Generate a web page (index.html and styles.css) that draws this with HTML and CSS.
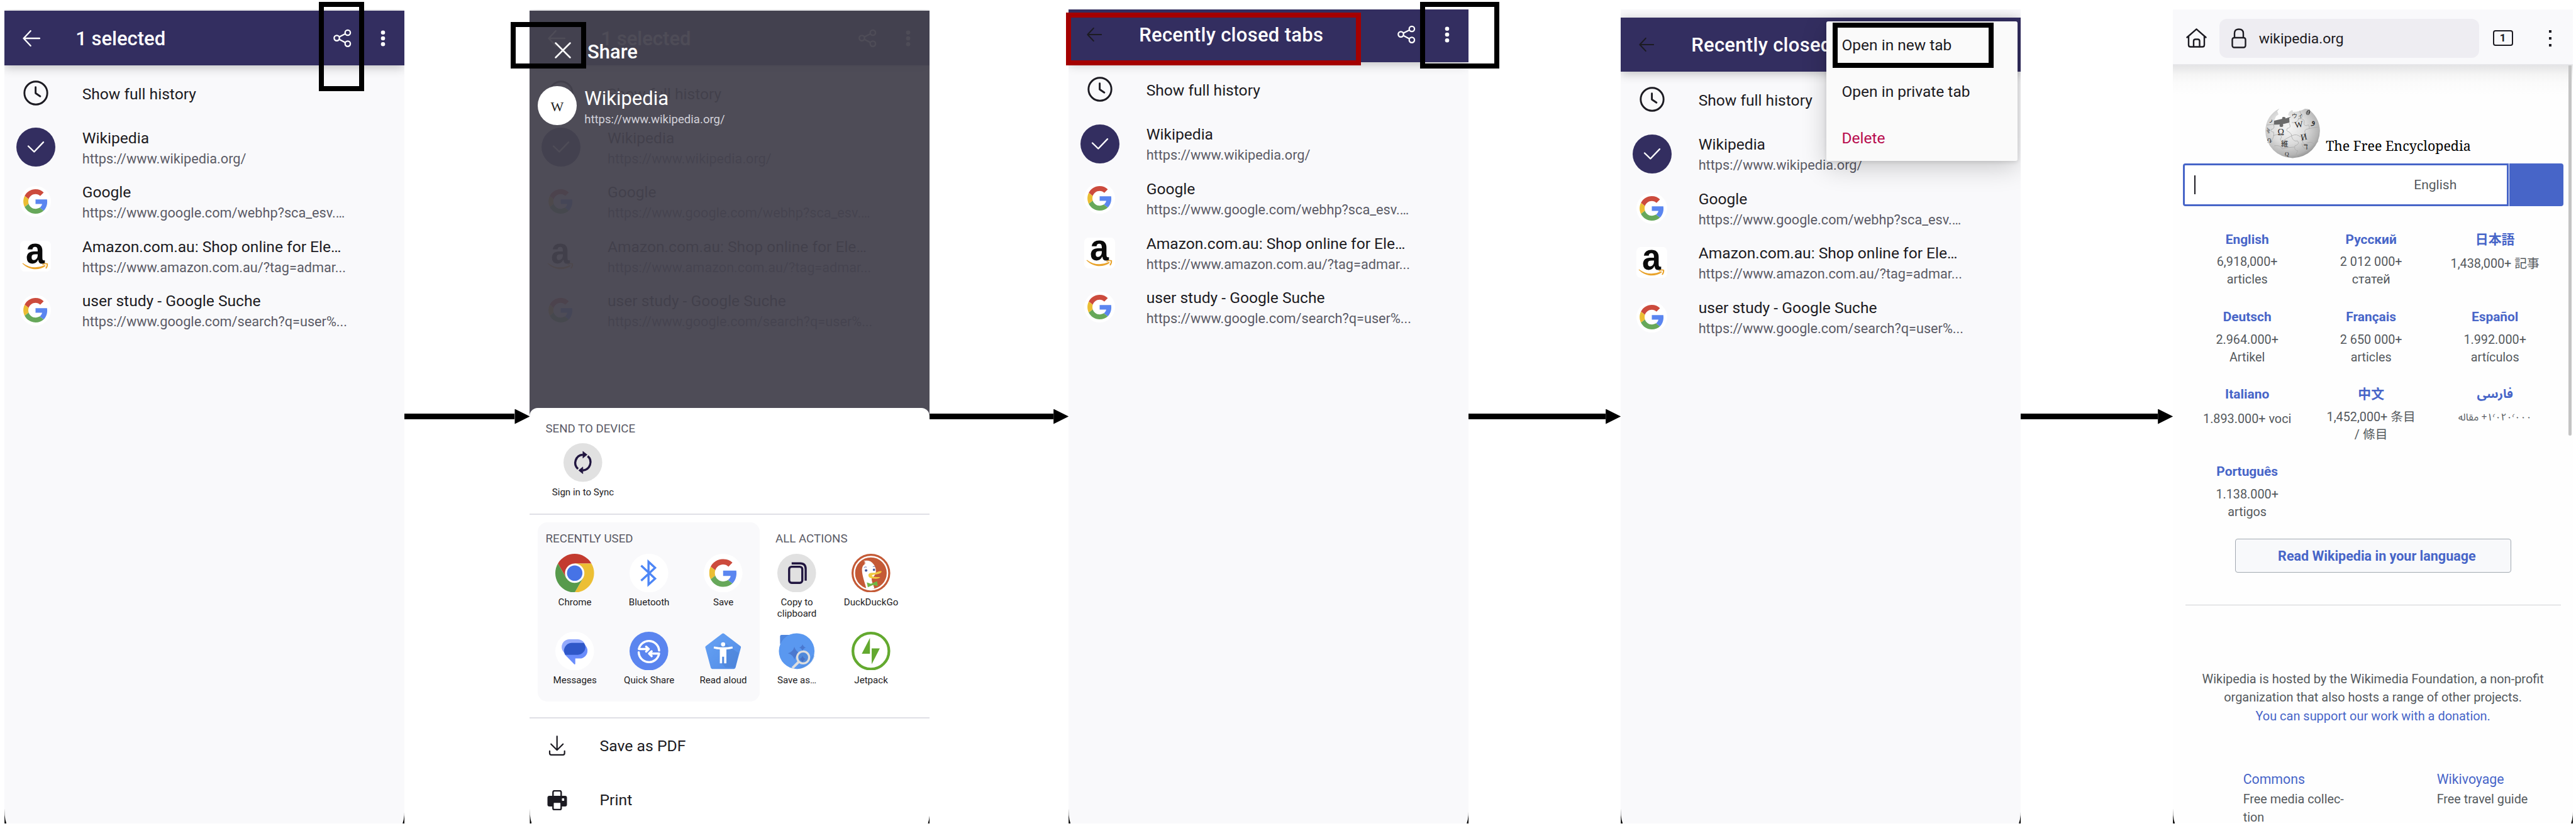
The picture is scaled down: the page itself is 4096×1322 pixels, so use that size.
FILE: index.html
```html
<!DOCTYPE html>
<html lang="en">
<head>
<meta charset="utf-8">
<title>Recently closed tabs – share and open flow</title>
<link rel="stylesheet" href="styles.css">
</head>
<body>
<svg class="defs" width="0" height="0" aria-hidden="true">
  <defs>
    <linearGradient id="pent" x1="0" y1="0" x2="1" y2="1"><stop offset="0" stop-color="#66a2f4"/><stop offset="1" stop-color="#528ce6"/></linearGradient>
    <radialGradient id="sphere" cx=".42" cy=".38" r=".66"><stop offset="0" stop-color="#f6f6f6"/><stop offset=".5" stop-color="#dcdcdc"/><stop offset=".85" stop-color="#b4b4b4"/><stop offset="1" stop-color="#8e8e8e"/></radialGradient>
  </defs>
  <symbol id="i-back" viewBox="0 0 28 26"><path d="M27 13H1.6M12.6 1.2 1.6 13l11 11.8" fill="none" stroke="currentColor" stroke-width="2.4" stroke-linecap="round" stroke-linejoin="round"/></symbol>
  <symbol id="i-share" viewBox="0 0 29 30"><g fill="none" stroke="currentColor" stroke-width="2.3"><circle cx="5.5" cy="14.6" r="4.2"/><circle cx="22.9" cy="6" r="4.2"/><circle cx="22.9" cy="23.6" r="4.2"/><path d="m9.3 12.7 9.8-4.9M9.3 16.6l9.8 5.1"/></g></symbol>
  <symbol id="i-dots" viewBox="0 0 8 26"><g fill="currentColor"><circle cx="4" cy="3.7" r="3.3"/><circle cx="4" cy="13" r="3.3"/><circle cx="4" cy="22.3" r="3.3"/></g></symbol>
  <symbol id="i-clock" viewBox="0 0 40 40"><g fill="none" stroke="currentColor" stroke-width="2.9" stroke-linecap="round" stroke-linejoin="round"><circle cx="20" cy="20" r="18.2"/><path d="M19.6 10.8v9.4l7.3 5"/></g></symbol>
  <symbol id="i-check" viewBox="0 0 62 62"><circle cx="31" cy="31" r="31" fill="#332e60"/><path d="m19 29.5 9.3 9L43 23.2" fill="none" stroke="#fff" stroke-width="2.4" stroke-linecap="round" stroke-linejoin="round"/></symbol>
  <symbol id="g" viewBox="0 0 48 48"><path fill="#cc4b3d" d="M24 9.5c3.54 0 6.71 1.22 9.21 3.6l6.85-6.85C35.9 2.38 30.47 0 24 0 14.62 0 6.51 5.38 2.56 13.22l7.98 6.19C12.43 13.72 17.74 9.5 24 9.5z"/><path fill="#5b86f0" d="M46.98 24.55c0-1.57-.15-3.09-.38-4.55H24v9.02h12.94c-.58 2.96-2.26 5.48-4.78 7.18l7.73 6c4.51-4.18 7.09-10.36 7.09-17.65z"/><path fill="#ebbe33" d="M10.53 28.59c-.48-1.45-.76-2.99-.76-4.59s.27-3.14.76-4.59l-7.98-6.19C.92 16.46 0 20.12 0 24c0 3.88.92 7.54 2.56 10.78l7.97-6.19z"/><path fill="#67a85a" d="M24 48c6.48 0 11.93-2.13 15.89-5.81l-7.73-6c-2.15 1.45-4.92 2.3-8.16 2.3-6.26 0-11.57-4.22-13.47-9.91l-7.98 6.19C6.51 42.62 14.62 48 24 48z"/></symbol>
  <symbol id="i-google" viewBox="0 0 48 48"><circle cx="24" cy="24" r="24" fill="#fff"/><use href="#g" x="5" y="5" width="38" height="38"/></symbol>
  <symbol id="i-amazon" viewBox="0 0 49 49"><rect width="49" height="49" rx="7" fill="#fff"/><text x="9" y="35.5" class="amazon-a" textLength="30" lengthAdjust="spacingAndGlyphs">a</text><path d="M3.5 36.2C14 46.5 29 48.2 40.5 40.2l-1-1.6C28 44 15 43.6 4.2 35.4Z" fill="#e9a32b"/><path d="M35.6 38c3-1.9 6-1.7 7.6-1.2.3 2.2-.7 5.2-2.3 7.2" fill="none" stroke="#e9a32b" stroke-width="1.9"/></symbol>
</svg>

<main class="board">

  <section class="screen">
    <div class="viewport">
      <header class="bar"><svg class="back"><use href="#i-back"/></svg><h1>1 selected</h1><svg class="share"><use href="#i-share"/></svg><svg class="dots"><use href="#i-dots"/></svg></header>
      <ul class="tabs">
        <li><span class="ico"><svg class="clock"><use href="#i-clock"/></svg></span><div class="txt"><p class="t">Show full history</p></div></li>
        <li><span class="ico"><svg class="check"><use href="#i-check"/></svg></span><div class="txt"><p class="t">Wikipedia</p><p class="u">https://www.wikipedia.org/</p></div></li>
        <li><span class="ico"><svg class="fav"><use href="#i-google"/></svg></span><div class="txt"><p class="t">Google</p><p class="u">https://www.google.com/webhp?sca_esv.…</p></div></li>
        <li><span class="ico"><svg class="fav"><use href="#i-amazon"/></svg></span><div class="txt"><p class="t">Amazon.com.au: Shop online for Ele…</p><p class="u">https://www.amazon.com.au/?tag=admar...</p></div></li>
        <li><span class="ico"><svg class="fav"><use href="#i-google"/></svg></span><div class="txt"><p class="t">user study - Google Suche</p><p class="u">https://www.google.com/search?q=user%...</p></div></li>
      </ul>
    </div>
    <div class="mark mark-share"></div>
  </section>

  <div class="arrow a1"></div>

  <section class="screen">
    <div class="viewport">
      <header class="bar"><svg class="back"><use href="#i-back"/></svg><h1>1 selected</h1><svg class="share"><use href="#i-share"/></svg><svg class="dots"><use href="#i-dots"/></svg></header>
      <ul class="tabs">
        <li><span class="ico"><svg class="clock"><use href="#i-clock"/></svg></span><div class="txt"><p class="t">Show full history</p></div></li>
        <li><span class="ico"><svg class="check"><use href="#i-check"/></svg></span><div class="txt"><p class="t">Wikipedia</p><p class="u">https://www.wikipedia.org/</p></div></li>
        <li><span class="ico"><svg class="fav"><use href="#i-google"/></svg></span><div class="txt"><p class="t">Google</p><p class="u">https://www.google.com/webhp?sca_esv.…</p></div></li>
        <li><span class="ico"><svg class="fav"><use href="#i-amazon"/></svg></span><div class="txt"><p class="t">Amazon.com.au: Shop online for Ele…</p><p class="u">https://www.amazon.com.au/?tag=admar...</p></div></li>
        <li><span class="ico"><svg class="fav"><use href="#i-google"/></svg></span><div class="txt"><p class="t">user study - Google Suche</p><p class="u">https://www.google.com/search?q=user%...</p></div></li>
      </ul>
      <div class="share-layer">
        <div class="share-head"><svg class="close" viewBox="0 0 26 26"><path d="m1.5 1.5 23 23M24.5 1.5l-23 23" stroke="#fff" stroke-width="2.5" stroke-linecap="round"/></svg><h2>Share</h2></div>
        <div class="share-page"><span class="w-badge">W</span><div><p class="sp-title">Wikipedia</p><p class="sp-url">https://www.wikipedia.org/</p></div></div>
        <div class="sheet">
          <div class="devices">
            <h3>SEND TO DEVICE</h3>
            <div class="app sync">
              <svg viewBox="0 0 100 100"><circle cx="50" cy="50" r="50" fill="#e1e1e1"/><g fill="none" stroke="#20153f" stroke-width="5.5"><path d="M37.5 66.5A21 21 0 0 1 50 29.8M62.5 33.5A21 21 0 0 1 50 70.2"/></g><path d="M50 21l11 8.8-11 8.8zM50 79l-11-8.8 11-8.8z" fill="#20153f" stroke="#20153f" stroke-width="1" stroke-linejoin="round"/></svg>
              <p>Sign in to Sync</p>
            </div>
          </div>
          <div class="actions">
            <div class="panel recent">
              <h3>RECENTLY USED</h3>
              <div class="apps three">
                <div class="app"><svg viewBox="0 0 100 100"><path fill="#c33b2f" d="M6.7 25A50 50 0 0 1 93.3 25H50L28.3 62.5Z"/><path fill="#ecbf34" d="M93.3 25A50 50 0 0 1 50 100L71.7 62.5 50 25Z"/><path fill="#579a4c" d="M50 100A50 50 0 0 1 6.7 25L28.3 62.5 50 75 71.7 62.5Z"/><circle cx="50" cy="50" r="25" fill="#fff"/><circle cx="50" cy="50" r="20" fill="#4673e6"/></svg><p>Chrome</p></div>
                <div class="app"><svg viewBox="0 0 100 100"><circle cx="50" cy="50" r="50" fill="#fff"/><path d="M30 30.5 66 64 49 79.5V20.5L66 36 30 69.5" fill="none" stroke="#4d86f6" stroke-width="5.5"/></svg><p>Bluetooth</p></div>
                <div class="app"><svg viewBox="0 0 100 100"><circle cx="50" cy="50" r="50" fill="#fff"/><use href="#g" x="14" y="13.5" width="72" height="72"/></svg><p>Save</p></div>
                <div class="app"><svg viewBox="0 0 100 100"><circle cx="50" cy="50" r="50" fill="#fff"/><rect x="16.5" y="19.5" width="61" height="40" rx="20" fill="#93aafc"/><path d="M42.5 29H63A20 20 0 0 1 63 69H51.5V83Q51 85.5 49 84L26 60.5A20 20 0 0 1 42.5 29Z" fill="#6a8dfc"/><path d="M42.5 29H73.5Q77.6 33 77.6 40A20 20 0 0 1 58 59.5H25.5Q22.5 54 22.5 49A20 20 0 0 1 42.5 29Z" fill="#2f58c9"/></svg><p>Messages</p></div>
                <div class="app"><svg viewBox="0 0 100 100"><circle cx="50" cy="50" r="50" fill="#5b85ef"/><g fill="none" stroke="#fff" stroke-width="5.6" stroke-linecap="round" stroke-linejoin="round"><path d="M76.3 48.5A26.5 26.5 0 0 0 24 44.5H49M43 38.5l6.5 6-6.5 6.5"/><path d="M23.7 53A26.5 26.5 0 0 0 76.3 56.5H51M57 50.5l-6.5 6 6.5 6.5"/></g></svg><p>Quick Share</p></div>
                <div class="app"><svg viewBox="0 0 100 100"><path d="M50 8 92 40 78 92H22L8 40Z" fill="url(#pent)" stroke="url(#pent)" stroke-width="8" stroke-linejoin="round"/><path d="M55 30 90 55 82 92H56L42 78V48L27 43Z" fill="#4678c8" opacity=".35"/><circle cx="50" cy="32.5" r="5.5" fill="#fff"/><path d="M26.5 38Q50 42.5 74 38L75 43Q66 45.2 58.5 46V81.5H52.5V64.5H47.5V81.5H41.5V46Q34 45.2 25.5 43Z" fill="#fff"/></svg><p>Read aloud</p></div>
              </div>
            </div>
            <div class="panel all">
              <h3>ALL ACTIONS</h3>
              <div class="apps two">
                <div class="app"><svg viewBox="0 0 100 100"><circle cx="50" cy="50" r="50" fill="#e1e1e1"/><g fill="none" stroke="#20153f" stroke-width="5.5"><rect x="30.5" y="33.5" width="34" height="41.5" rx="6.5"/><path d="M37 24.8H59Q73.2 24.8 73.2 39.5V69.5"/></g></svg><p>Copy to clipboard</p></div>
                <div class="app"><svg viewBox="0 0 100 100"><circle cx="50" cy="50" r="50" fill="#c45a36"/><circle cx="50" cy="50" r="42.8" fill="none" stroke="#fff" stroke-width="4"/><path d="M37 25 32 24.5Q36 22 36 21L31 18.5Q48 15 56 26 63 33 63 46 62 56 52 64C52 74 57 80 59 89.5Q48 93 38 89.5C35 76 27 57 27 42 27 33 31 27 37 25Z" fill="#fff"/><circle cx="37.5" cy="43" r="3.4" fill="#46599c"/><circle cx="58" cy="41.3" r="3" fill="#46599c"/><path d="M32 36Q35 32.5 39 34.5M55 33.5Q58 31.5 61 33.5" fill="none" stroke="#46599c" stroke-width="1.4"/><path d="M43.5 55C44 48 54 49 60 49 67 48 71 44 77.5 45 78 50 70 52 62 53.5 55 54 52 54.5 53 57.5 56 60.5 66 59.5 74 60 72 64.5 64 65 57 64 49 63 43.5 61 43.5 55Z" fill="#f1cb40"/><path d="M39.5 74 50 77.5 66 70.5 68 83.5 56 80.5 42 86.5Z" fill="#70b546"/></svg><p>DuckDuckGo</p></div>
                <div class="app"><svg viewBox="0 0 100 100"><path d="M7 32V12Q7 8 11 8H40Z" fill="#4f86de"/><circle cx="50" cy="50" r="46" fill="#5a98f0"/><path d="M70 82 92 60 96 62A46 46 0 0 1 50 96Z" fill="#4e8be0" opacity=".5"/><g fill="#4a78cf"><path d="M44 39Q47.5 52 60 55.5 47.5 59 44 72 40.5 59 27.5 55.5 40.5 52 44 39Z"/><path d="M65 32.5Q67 39 73.5 41 67 43 65 49.5 63 43 56.5 41 63 39 65 32.5Z"/></g><path d="M55.5 77.5 39 94" stroke="#dedede" stroke-width="6.5"/><circle cx="66.7" cy="66.3" r="15.5" fill="#5089da" stroke="#dedede" stroke-width="5.4"/><path d="M65 62Q67 68.5 73.5 70.5 67 72.5 65 79 63 72.5 56.5 70.5 63 68.5 65 62Z" fill="#4670c2"/></svg><p>Save as…</p></div>
                <div class="app"><svg viewBox="0 0 100 100"><circle cx="50" cy="50" r="46.5" fill="#fff" stroke="#63a92f" stroke-width="7"/><path d="M47.5 16V57H26.5ZM52 43H73L52 84Z" fill="#63a92f"/></svg><p>Jetpack</p></div>
              </div>
            </div>
          </div>
          <div class="outputs">
            <div class="out"><svg viewBox="0 0 32 32"><g fill="none" stroke="#1c1b22" stroke-width="2.2" stroke-linecap="round" stroke-linejoin="round"><path d="M15.7 1.3V22.5M6.2 13.7l9.5 9.5 9.5-9.5"/><path d="M4 24.8v3.5q0 2.5 2.5 2.5H25.2q2.5 0 2.5-2.5v-3.5"/></g></svg><p>Save as PDF</p></div>
            <div class="out"><svg viewBox="0 0 32 32"><rect x="9.3" y="1" width="13" height="14" rx="2.5" fill="none" stroke="#1c1b22" stroke-width="2.4"/><path d="M3.5 9H28.5Q31.5 9 31.5 12V23Q31.5 26 28.5 26H3.5Q.5 26 .5 23V12Q.5 9 3.5 9Z" fill="#1c1b22"/><rect x="23.5" y="13" width="3.6" height="4" rx=".8" fill="#fff"/><rect x="9.3" y="19" width="13" height="12" rx="2" fill="#fff" stroke="#1c1b22" stroke-width="2.4"/></svg><p>Print</p></div>
          </div>
        </div>
      </div>
    </div>
    <div class="mark mark-close"></div>
  </section>

  <div class="arrow a2"></div>

  <section class="screen raised">
    <div class="viewport">
      <header class="bar dark-back"><svg class="back"><use href="#i-back"/></svg><h1 class="wide">Recently closed tabs</h1><svg class="share"><use href="#i-share"/></svg><svg class="dots"><use href="#i-dots"/></svg></header>
      <ul class="tabs">
        <li><span class="ico"><svg class="clock"><use href="#i-clock"/></svg></span><div class="txt"><p class="t">Show full history</p></div></li>
        <li><span class="ico"><svg class="check"><use href="#i-check"/></svg></span><div class="txt"><p class="t">Wikipedia</p><p class="u">https://www.wikipedia.org/</p></div></li>
        <li><span class="ico"><svg class="fav"><use href="#i-google"/></svg></span><div class="txt"><p class="t">Google</p><p class="u">https://www.google.com/webhp?sca_esv.…</p></div></li>
        <li><span class="ico"><svg class="fav"><use href="#i-amazon"/></svg></span><div class="txt"><p class="t">Amazon.com.au: Shop online for Ele…</p><p class="u">https://www.amazon.com.au/?tag=admar...</p></div></li>
        <li><span class="ico"><svg class="fav"><use href="#i-google"/></svg></span><div class="txt"><p class="t">user study - Google Suche</p><p class="u">https://www.google.com/search?q=user%...</p></div></li>
      </ul>
    </div>
    <div class="mark mark-title"></div>
    <div class="mark mark-menu"></div>
  </section>

  <div class="arrow a3"></div>

  <section class="screen lowered">
    <div class="viewport">
      <header class="bar dark-back"><svg class="back"><use href="#i-back"/></svg><h1 class="wide">Recently closed tabs</h1></header>
      <ul class="tabs">
        <li><span class="ico"><svg class="clock"><use href="#i-clock"/></svg></span><div class="txt"><p class="t">Show full history</p></div></li>
        <li><span class="ico"><svg class="check"><use href="#i-check"/></svg></span><div class="txt"><p class="t">Wikipedia</p><p class="u">https://www.wikipedia.org/</p></div></li>
        <li><span class="ico"><svg class="fav"><use href="#i-google"/></svg></span><div class="txt"><p class="t">Google</p><p class="u">https://www.google.com/webhp?sca_esv.…</p></div></li>
        <li><span class="ico"><svg class="fav"><use href="#i-amazon"/></svg></span><div class="txt"><p class="t">Amazon.com.au: Shop online for Ele…</p><p class="u">https://www.amazon.com.au/?tag=admar...</p></div></li>
        <li><span class="ico"><svg class="fav"><use href="#i-google"/></svg></span><div class="txt"><p class="t">user study - Google Suche</p><p class="u">https://www.google.com/search?q=user%...</p></div></li>
      </ul>
      <div class="menu"><p>Open in new tab</p><p>Open in private tab</p><p class="danger">Delete</p></div>
    </div>
    <div class="mark mark-open"></div>
  </section>

  <div class="arrow a4"></div>

  <section class="screen web">
    <div class="viewport">
      <header class="toolbar">
        <svg class="home" viewBox="0 0 33 31"><g fill="none" stroke="#1c1b22" stroke-width="2.4" stroke-linejoin="round" stroke-linecap="round"><path d="M1.5 14.5 16.5 1.3 31.5 14.5M4 12.5V26.5Q4 29.5 7 29.5H26Q29 29.5 29 26.5V12.5"/><path d="M12 29V20.5Q12 17.5 15 17.5H18.5Q21.5 17.5 21.5 20.5V29"/></g></svg>
        <div class="address"><svg viewBox="0 0 24 32"><g fill="none" stroke="#1c1b22" stroke-width="2.4"><rect x="1.5" y="15" width="21" height="15.5" rx="3"/><path d="M5 15V8Q5 1.5 12 1.5 19 1.5 19 8V15"/></g></svg><span>wikipedia.org</span></div>
        <span class="counter">1</span>
        <span class="more"><i></i><i></i><i></i></span>
      </header>
      <div class="page">
        <div class="brand">
          <svg viewBox="0 0 87 80">
            <path d="M22.5 .5 19 5 21 10 17 13 14 20V27L23 25 24 29 28 26 39 24 37 15 41 14 36 11 38 6 43 3 44 6Q54 6 63 1L68 1.5Q86 14 86.8 36A43.4 43.4 0 0 1 0 36Q1 12 22.5 .5Z" fill="url(#sphere)"/>
            <path d="M14 20 27 17Q26 14 29 14 33 14 32 16.5L41 13.5 38 16 38.5 23 28 25.5Q29.5 30 25.5 30 21.5 30 23 26L13.5 26.5Z" fill="#6b6b6b"/>
            <g fill="none" stroke="#aaa" stroke-width=".8"><path d="M2 27 13 26Q16 33 9 34 8 38 13 38 16 50 3 55M12 44Q24 39 26 46 21 52 28 52 34 48 42 44T56 46Q60 40 64 41 60 34 68 33 76 31 84 30M38 24Q42 32 35 32 32 37 38 38 43 42 42 46 45 54 51 52 56 57 47 60 45 67 52 68 47 74 50 78M42 23Q52 24 53 16 58 18 59 12 54 6 55 4M53 17Q62 16 62 22 60 28 66 28 70 24 70 32M64 43 60 48Q57 56 64 57 72 52 76 56T84 52M14 60Q24 58 27 65 36 62 46 62M58 56Q60 68 70 64"/></g>
            <g class="glyphs"><text x="19.5" y="43">Ω</text><text x="47" y="31" transform="rotate(-8 50 30)">W</text><text x="57" y="51" transform="rotate(-12 60 50)">И</text><text x="25" y="61" class="cjk">維</text><text x="61" y="66">ד</text><text x="42" y="15" class="small">ウィ</text><text x="73" y="25">و</text><text x="31" y="76" class="small">Q</text><text x="2" y="37" class="small">ৡ</text><text x="3" y="55" class="small">Դ</text><text x="7" y="21" class="small">ر</text></g>
            <path d="M65 8Q66 4 70 3 72 6 69 10 66 11 65 8M67 9l1-5M69 9l1-4" fill="none" stroke="#444" stroke-width="1.1"/>
          </svg>
          <p>The Free Encyclopedia</p>
        </div>
        <div class="search"><div class="field"><span class="caret"></span><span class="lang">English</span></div><div class="go"></div></div>
        <div class="langs">
          <div><b>English</b><p>6,918,000+<br>articles</p></div>
          <div><b>Русский</b><p>2 012 000+<br>статей</p></div>
          <div lang="ja"><b>日本語</b><p class="low">1,438,000+ 記事</p></div>
          <div><b>Deutsch</b><p>2.964.000+<br>Artikel</p></div>
          <div><b>Français</b><p>2 650 000+<br>articles</p></div>
          <div><b>Español</b><p>1.992.000+<br>artículos</p></div>
          <div><b>Italiano</b><p class="low">1.893.000+ voci</p></div>
          <div lang="zh"><b>中文</b><p>1,452,000+ 条目<br>/ 條目</p></div>
          <div lang="fa" class="fa"><b>فارسی</b><p dir="rtl">۱٬۰۲۰٬۰۰۰+ مقاله</p></div>
          <div><b>Português</b><p>1.138.000+<br>artigos</p></div>
        </div>
        <div class="read">Read Wikipedia in your language</div>
        <hr>
        <p class="hosted">Wikipedia is hosted by the Wikimedia Foundation, a non-profit<br>organization that also hosts a range of other projects.<br><a>You can support our work with a donation.</a></p>
        <div class="projects">
          <div><a>Commons</a><p>Free media collec-<br>tion</p></div>
          <div><a>Wikivoyage</a><p>Free travel guide</p></div>
        </div>
      </div>
      <div class="scrollbar"></div>
    </div>
  </section>

</main>
</body>
</html>
```
FILE: styles.css
```css
* { box-sizing: border-box; }
body, h1, h2, h3, p, ul { margin: 0; padding: 0; }
body { width: 4096px; height: 1322px; overflow: hidden; background: #fff; font-family: Roboto, "Noto Sans CJK JP", "Noto Sans Arabic", sans-serif; color: #1c1b22; }
ul { list-style: none; }
svg { display: block; flex: none; }
.defs { position: absolute; }

.board { display: flex; align-items: flex-start; padding: 14.5px 0 0 7.2px; }

/* flow arrows between the screens */
.arrow { flex: none; height: 24px; margin-top: 636px; display: flex; align-items: center; }
.arrow::before { content: ""; flex: 1; height: 8.6px; background: #000; }
.arrow::after { content: ""; width: 24px; height: 24px; background: #000; clip-path: polygon(0 0, 100% 50%, 0 100%); }
.a1 { width: 199.3px; }
.a2 { width: 220.7px; }
.a3 { width: 242px; }
.a4 { width: 242px; }

/* phone screens */
.screen { position: relative; flex: none; width: 636px; height: 1295.5px; }
.viewport { position: relative; height: 100%; overflow: hidden; background: #f9f9fb; padding-top: 2.8px; }
.raised .viewport { padding-top: 0; }
.lowered .viewport { padding-top: 13.4px; }
.raised .bar { margin-top: -2.5px; }
.viewport::before, .viewport::after { content: ""; position: absolute; z-index: 5; bottom: 0; width: 3px; height: 24px; background: #000; }
.viewport::before { left: 0; clip-path: polygon(0 0, 12% 45%, 45% 75%, 100% 100%, 0 100%); }
.viewport::after { right: 0; clip-path: polygon(100% 0, 88% 45%, 55% 75%, 0 100%, 100% 100%); }

.bar { height: 86.6px; display: flex; align-items: center; padding: 0 30px 0 29px; background: #332e60; color: #fff; box-shadow: 0 3px 16px rgba(0, 0, 0, .24); }
.bar .back { width: 28px; height: 26px; }
.dark-back .back { color: #1c1b22; width: 24px; }
.bar h1 { flex: 1; margin-left: 56px; padding-top: 2px; font-size: 31px; line-height: 36px; font-weight: 500; white-space: nowrap; }
.bar h1.wide { margin-left: 59px; letter-spacing: .3px; }
.share { width: 29px; height: 30px; }
.dots { width: 8px; height: 26px; margin-left: 46px; }

.tabs { position: relative; padding-top: .4px; }
.tabs li { height: 86.6px; display: flex; align-items: center; }
.ico { width: 123.5px; display: flex; }
.clock { width: 40px; height: 40px; margin-left: 29.5px; }
.check { width: 62px; height: 62px; margin-left: 19px; }
.fav { width: 49px; height: 49px; margin-left: 25px; }
.amazon-a { font: bold 60px "Liberation Sans", sans-serif; fill: #0a0a0a; }
.txt { flex: 1; padding-top: 4px; white-space: nowrap; }
.t { font-size: 24.6px; line-height: 30px; }
.u { font-size: 21.7px; line-height: 31px; color: #5b5b66; padding-top: 2px; }

/* annotation frames */
.mark { position: absolute; z-index: 10; border: 8px solid #000; }
.mark-share { left: 499.5px; top: -11.3px; width: 72.6px; height: 142px; }
.mark-close { left: -30px; top: 20px; width: 120px; height: 74px; }
.mark-title { left: -4.5px; top: 5.6px; width: 469px; height: 84px; border-color: #a40000; }
.mark-menu { left: 559.3px; top: -11.3px; width: 125.8px; height: 105.3px; }
.mark-open { left: 337.2px; top: 21.8px; width: 255.2px; height: 72px; }

/* share overlay */
.share-layer { position: absolute; inset: 2.8px 0 0 0; background: rgba(69, 66, 78, .95); display: flex; flex-direction: column; }
.share-layer > * { flex: none; }
.share-head { height: 119.5px; display: flex; align-items: flex-start; padding: 49.5px 0 0 39.5px; }
.close { width: 26px; height: 26px; fill: none; }
.share-head h2 { margin: -2px 0 0 26px; font-size: 31px; line-height: 36px; font-weight: 500; color: #fff; }
.share-page { display: flex; align-items: center; padding-left: 12.6px; height: 62px; color: #fff; }
.w-badge { width: 61.6px; height: 61.6px; border-radius: 50%; background: #fff; color: #222; font: 22px/65px "Liberation Serif", serif; text-align: center; margin-right: 12.5px; }
.sp-title { font-size: 31px; line-height: 36px; margin-top: 5px; }
.sp-url { padding-top: 3px; font-size: 18.6px; line-height: 24px; color: #d3d2da; }
.sheet { height: 672px; margin-top: 450.5px; background: #fff; border-radius: 13px 13px 0 0; }
.sheet h3 { font-size: 18.7px; line-height: 22px; font-weight: 400; color: #5b5b66; }
.devices { height: 169.5px; padding: 21.3px 25px 0; border-bottom: 2.5px solid #e0e0e6; }
.sync { margin: 12.7px 0 0 .5px; }
.app { width: 118px; display: flex; flex-direction: column; align-items: center; }
.app svg { width: 61.6px; height: 61.6px; }
.app p { margin-top: 7.8px; font-size: 15.1px; line-height: 17.8px; text-align: center; white-space: nowrap; }
.two .app:first-child p { white-space: normal; width: 70px; }
.actions { display: flex; height: 324px; padding-top: 12.5px; border-bottom: 2.5px solid #e0e0e6; }
.panel { height: 285px; padding-top: 14.5px; }
.recent { width: 353px; margin-left: 12.6px; border-radius: 15px; background: #f9f9fb; }
.recent h3 { padding-left: 12.5px; }
.all { padding-left: 25px; }
.apps { display: grid; grid-auto-rows: 124px; padding-top: 12.8px; }
.three { grid-template-columns: repeat(3, 118px); }
.two { grid-template-columns: repeat(2, 118px); margin-left: -25px; }
.out { height: 86.5px; display: flex; align-items: center; padding-left: 27.5px; font-size: 24.75px; }
.out svg { width: 32px; height: 32px; }
.out p { margin-left: 51.5px; }

/* overflow menu */
.menu { position: absolute; z-index: 3; left: 326.8px; top: 19.7px; width: 303.6px; height: 222px; padding-top: 1px; border-radius: 3px; background: #fafafa; box-shadow: 0 10px 40px rgba(0, 0, 0, .2), 0 2px 6px rgba(0, 0, 0, .12); }
.menu p { height: 74px; padding-left: 24.5px; font-size: 24.5px; line-height: 74px; }
.menu .danger { color: #b80c4e; }

/* browser page */
.web .viewport { background: #fefefe; padding-top: 0; }
.toolbar { height: 89.5px; display: flex; align-items: center; padding: 4.7px 34px 0 21px; background: #f9f9fb; border-bottom: 2px solid #e6e6e9; }
.home { width: 33px; height: 31px; }
.address { width: 413.3px; height: 62px; margin-left: 20px; padding-left: 19px; border-radius: 12px; background: #eeedf2; display: flex; align-items: center; }
.address svg { width: 24px; height: 32px; }
.address span { margin-left: 19.5px; padding-top: 1.5px; font-size: 22.8px; }
.counter { width: 32px; height: 25px; margin-left: 21.2px; border: 2.4px solid #1c1b22; border-radius: 4px; font-size: 17px; line-height: 20.5px; font-weight: 700; text-align: center; }
.more { margin-left: auto; height: 26px; display: flex; flex-direction: column; justify-content: space-between; }
.more i { width: 4px; height: 4px; background: #1c1b22; }
.page { padding: 68px 15.5px 0; background: linear-gradient(#e4e4e5, #f4f4f4 14px, #fbfbfb 28px, #fefefe 46px); }
.brand { display: flex; align-items: flex-end; margin-left: 131px; height: 79.5px; }
.brand svg { width: 87px; height: 80px; }
.brand p { margin: 0 0 7.5px 9.5px; font: 21.4px/24px "Noto Serif", "DejaVu Serif Condensed", serif; color: #000; white-space: nowrap; }
.glyphs { font: 14px "Liberation Serif", "DejaVu Serif", serif; fill: #222; }
.glyphs .cjk { font: 11.5px "Noto Sans CJK JP", sans-serif; }
.glyphs .small { font-size: 9px; }
.search { display: flex; height: 67.3px; margin-top: 8.8px; }
.field { width: 519px; border: 3.5px solid #4765c8; border-radius: 4px 0 0 4px; background: #fff; display: flex; align-items: center; padding: 0 80px 0 15.5px; }
.caret { width: 1.8px; height: 30px; background: #1c1b22; }
.lang { margin-left: auto; font-size: 21px; color: #54595d; }
.go { width: 85.5px; margin-left: 1px; background: #4765c8; border-radius: 0 4px 4px 0; }
.langs { display: grid; grid-template-columns: repeat(3, 197px); grid-auto-rows: 123px; margin: 39.6px 0 0 4px; text-align: center; }
.langs > div { white-space: nowrap; }
.langs b { display: block; font-size: 20.9px; line-height: 28px; height: 28px; font-weight: 700; color: #4765c8; }
.langs p { margin-top: 8.1px; font-size: 19.8px; line-height: 28px; color: #54595d; }
.langs p.low { margin-top: 11px; }
.langs div:nth-child(n+4) p { padding-top: .5px; }
.langs .fa b, .langs .fa p { font-family: "Noto Sans Arabic", "DejaVu Sans", sans-serif; font-size: 15.8px; }
.langs .fa b { font-size: 19.5px; }
.read { width: 439px; height: 54.5px; margin: -2.5px 0 0 83.2px; padding-left: 12px; border: 1.5px solid #a2a9b1; border-radius: 4px; background: #f8f9fb; color: #4765c8; font-size: 21.5px; line-height: 53px; font-weight: 700; text-align: center; white-space: nowrap; }
.page hr { margin: 51px 4px 0; border: 0; border-top: 1.5px solid #cfd1d3; }
.hosted { margin-top: 102.6px; font-size: 19.95px; line-height: 29.7px; text-align: center; color: #54595d; white-space: nowrap; }
.page a { color: #4765c8; }
.projects { display: flex; margin: 70.4px 0 0 96px; }
.projects > div { flex: none; width: 308px; font-size: 21.3px; line-height: 30px; }
.projects p { padding-top: 1.3px; font-size: 19.8px; line-height: 29.6px; color: #54595d; white-space: nowrap; }
.scrollbar { position: absolute; right: 2.5px; top: 89.5px; width: 4.7px; height: 589px; border-radius: 0 0 3px 3px; background: #c4c4c4; }
```
